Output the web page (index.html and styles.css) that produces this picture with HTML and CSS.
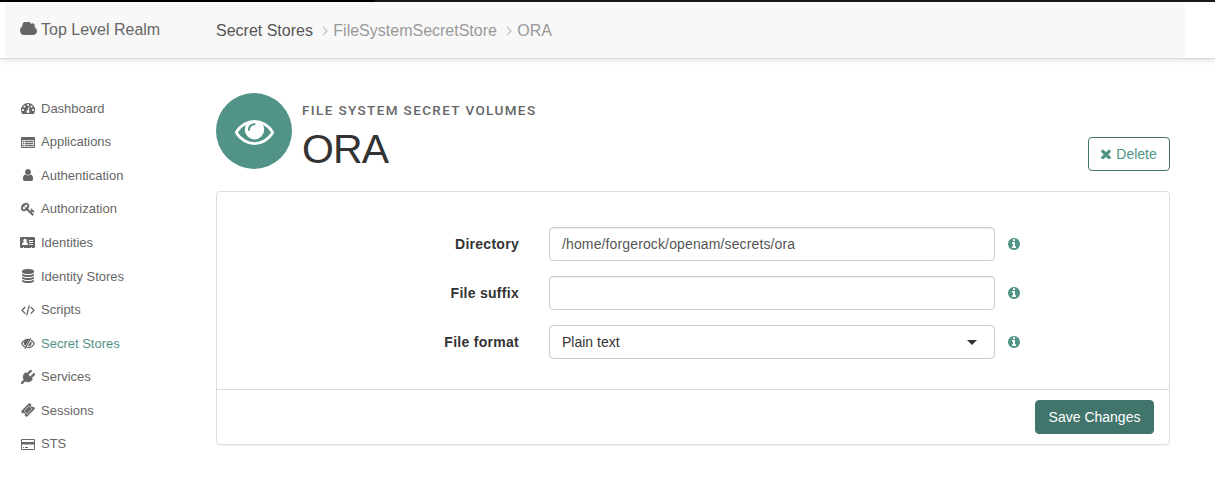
FILE: index.html
```html
<!DOCTYPE html>
<html lang="en">
<head>
<meta charset="utf-8">
<title>ORA - Secret Stores</title>
<link rel="stylesheet" href="styles.css">
</head>
<body>
<svg class="sprite" aria-hidden="true">
  <symbol id="info" viewBox="128 128 1536 1536"><path d="M1152 1376v-160q0-14-9-23t-23-9h-96v-512q0-14-9-23t-23-9h-320q-14 0-23 9t-9 23v160q0 14 9 23t23 9h96v320h-96q-14 0-23 9t-9 23v160q0 14 9 23t23 9h448q14 0 23-9t9-23zm-128-896v-160q0-14-9-23t-23-9h-192q-14 0-23 9t-9 23v160q0 14 9 23t23 9h192q14 0 23-9t9-23zm640 416q0 209-103 385.5t-279.5 279.5-385.5 103-385.5-103-279.5-279.5-103-385.5 103-385.5 279.5-279.5 385.5-103 385.5 103 279.5 279.5 103 385.5z"/></symbol>
</svg>
<div class="topline"></div>
<header class="header">
  <div class="header-inner">
    <a class="realm"><svg class="cloud" viewBox="64 256 1920 1280" preserveAspectRatio="none"><path d="M1984 1152q0 159-112.5 271.5t-271.5 112.5h-1088q-185 0-316.500-131.500t-131.500-316.500q0-132 71-241.500t187-163.500q-2-28-2-43 0-212 150-362t362-150q158 0 286.500 88t187.500 230q70-62 166-62 106 0 181 75t75 181q0 75-41 138 129 30 213 134.500t84 239.500z"/></svg><span>Top Level Realm</span></a>
    <nav class="crumbs">
      <a class="crumb-link">Secret Stores</a>
      <svg class="chev" viewBox="0 0 6 10"><path d="M1 1l4 4-4 4"/></svg>
      <span>FileSystemSecretStore</span>
      <svg class="chev" viewBox="0 0 6 10"><path d="M1 1l4 4-4 4"/></svg>
      <span>ORA</span>
    </nav>
  </div>
</header>
<div class="page">
  <nav class="sidebar">
    <a class="item"><svg class="ico" viewBox="0 0 1792 1792"><path d="M384 1152q0-53-37.5-90.5t-90.5-37.5-90.5 37.5-37.5 90.5 37.5 90.5 90.5 37.5 90.5-37.5 37.5-90.5zm192-448q0-53-37.5-90.5t-90.5-37.5-90.5 37.5-37.5 90.5 37.5 90.5 90.5 37.5 90.5-37.5 37.5-90.5zm428 481l101-382q6-26-7.5-48.5t-38.5-29.5-48 6.5-30 39.5l-101 382q-60 5-107 43.5t-63 98.5q-20 77 20 146t117 89 146-20 89-117q16-60-6-117t-72-91zm660-33q0-53-37.5-90.5t-90.5-37.5-90.5 37.5-37.5 90.5 37.5 90.5 90.5 37.5 90.5-37.5 37.5-90.5zm-640-640q0-53-37.5-90.5t-90.5-37.5-90.5 37.5-37.5 90.5 37.5 90.5 90.5 37.5 90.5-37.5 37.5-90.5zm448 192q0-53-37.5-90.5t-90.5-37.5-90.5 37.5-37.5 90.5 37.5 90.5 90.5 37.5 90.5-37.5 37.5-90.5zm320 448q0 261-141 483-19 29-54 29h-1402q-35 0-54-29-141-221-141-483 0-182 71-348t191-286 286-191 348-71 348 71 286 191 191 286 71 348z"/></svg>Dashboard</a>
    <a class="item"><svg class="ico" viewBox="0 0 14 14"><path class="tint" d="M1 3h12v9H1z"/><path fill-rule="evenodd" d="M1 2h12q1 0 1 1v9q0 1-1 1h-12q-1 0-1-1v-9q0-1 1-1zM1 5v7h12v-7zM2 6h1v1h-1zM4 6h8v1h-8zM2 8h1v1h-1zM4 8h8v1h-8zM2 10h1v1h-1zM4 10h8v1h-8z"/></svg>Applications</a>
    <a class="item"><svg class="ico" viewBox="0 0 1792 1792"><path d="M1536 1399q0 109-62.5 187t-150.5 78h-854q-88 0-150.5-78t-62.5-187q0-85 8.5-160.5t31.5-152 58.5-131 94-89 134.5-34.5q131 128 313 128t313-128q76 0 134.5 34.5t94 89 58.5 131 31.5 152 8.5 160.5zm-256-887q0 159-112.5 271.5t-271.5 112.5-271.5-112.5-112.5-271.5 112.5-271.5 271.5-112.5 271.5 112.5 112.5 271.5z"/></svg>Authentication</a>
    <a class="item"><svg class="ico" viewBox="0 0 1792 1792"><path class="bold" d="M832 512q0-80-56-136t-136-56-136 56-56 136q0 42 19 83-41-19-83-19-80 0-136 56t-56 136 56 136 136 56 136-56 56-136q0-42-19-83 41 19 83 19 80 0 136-56t56-136zm851 704q0 17-49 66t-66 49q-9 0-28.5-16t-36.5-33-38.5-40-24.5-26l-96 96 220 220q28 28 28 68 0 42-39 81t-81 39q-40 0-68-28l-671-671q-176 131-365 131-163 0-265.5-102.5t-102.5-265.5q0-160 95-313t248-248 313-95q163 0 265.5 102.5t102.5 265.5q0 189-131 365l355 355 96-96q-3-3-26-24.5t-40-38.5-33-36.5-16-28.5q0-17 49-66t66-49q13 0 23 10 6 6 46 44.5t82 79.5 86.5 86 73 78 28.5 41z"/></svg>Authorization</a>
    <a class="item"><svg class="ico wide" viewBox="0 0 15 14"><path fill-rule="evenodd" d="M1 2h13q1 0 1 1v9q0 1-1 1h-2v-.8h-1v.8h-7v-.8h-1v.8h-2q-1 0-1-1v-9q0-1 1-1zM5 3.800a1.800 1.800 0 0 0-1.200 3.100Q2 7.100 2 10h6Q8 7.100 6.200 6.900A1.800 1.800 0 0 0 5 3.800zM9 5v1h4v-1zM9 7v1h4v-1zM9 9v.8h4v-.8z"/></svg>Identities</a>
    <a class="item"><svg class="ico" viewBox="0 0 1792 1792"><path d="M896 768q237 0 443-43t325-127v170q0 69-103 128t-280 93.500-385 34.500-385-34.500-280-93.500-103-128v-170q119 84 325 127t443 43zm0 768q237 0 443-43t325-127v170q0 69-103 128t-280 93.500-385 34.500-385-34.500-280-93.500-103-128v-170q119 84 325 127t443 43zm0-384q237 0 443-43t325-127v170q0 69-103 128t-280 93.500-385 34.500-385-34.500-280-93.500-103-128v-170q119 84 325 127t443 43zm0-1152q208 0 385 34.500t280 93.500 103 128v128q0 69-103 128t-280 93.500-385 34.500-385-34.500-280-93.500-103-128v-128q0-69 103-128t280-93.500 385-34.500z"/></svg>Identity Stores</a>
    <a class="item"><svg class="ico line" viewBox="0 0 14 14"><path d="M4.300 4L1 7.300l3.300 3.300M9.700 4L13 7.300l-3.300 3.300M8.300 2.300L5.700 12.300"/></svg>Scripts</a>
    <a class="item active"><svg class="ico line" viewBox="0 0 14 14"><path d="M7 3.300Q3 3.300.7 7.500 3 11.700 7 11.700T13.300 7.500Q11 3.300 7 3.300z"/><path class="solid" d="M7 3.700A3.300 3.300 0 0 0 4.600 9.800L8 3.800zM9.900 4.900L6.800 10.300A3.300 3.300 0 0 0 9.900 4.900z"/><path class="slash" d="M10.500 2L4.900 13"/><path d="M9.700 2.200L4.100 12.800"/></svg>Secret Stores</a>
    <a class="item"><svg class="ico" viewBox="0 0 1792 1792"><path class="bold" d="M1755 453q37 38 37 90.500t-37 90.500l-401 400 150 150-160 160q-163 163-389.500 186.500t-411.500-100.500l-362 362h-181v-181l362-362q-124-185-100.500-411.500t186.500-389.500l160-160 150 150 400-401q38-37 91-37t90 37 37 90.500-37 90.500l-400 401 234 234 401-400q38-37 91-37t90 37z"/></svg>Services</a>
    <a class="item"><svg class="ico" viewBox="0 0 1792 1792"><path class="bold" d="M1024 452l316 316-572 572-316-316zm-211 979l618-618q19-19 19-45t-19-45l-362-362q-18-18-45-18t-45 18l-618 618q-19 19-19 45t19 45l362 362q18 18 45 18t45-18zm889-637l-907 908q-37 37-90.500 37t-90.500-37l-126-125q56-56 56-136t-56-136-136-56-136 56l-125-126q-37-37-37-90.500t37-90.500l907-906q37-37 90.500-37t90.500 37l125 125q-56 56-56 136t56 136 136 56 136-56l126 125q37 37 37 90.500t-37 90.500z"/></svg>Sessions</a>
    <a class="item"><svg class="ico" viewBox="0 0 14 14"><path fill-rule="evenodd" d="M1 2h12q1 0 1 1v9q0 1-1 1h-12q-1 0-1-1v-9q0-1 1-1zM1 3v2h12v-2zM1 7.500v4.500h12v-4.500zM2 10h1v1h-1zM4 10h3v1h-3z"/></svg>STS</a>
  </nav>
  <main class="main">
    <div class="title-row">
      <div class="badge"><svg class="eye" viewBox="0 384 1792 1152"><path d="M1664 960q-152-236-381-353 61 104 61 225 0 185-131.500 316.500t-316.500 131.500-316.500-131.500-131.500-316.500q0-121 61-225-229 117-381 353 133 205 333.500 326.500t434.500 121.500 434.500-121.500 333.500-326.500zm-720-384q0-20-14-34t-34-14q-125 0-214.500 89.500t-89.500 214.500q0 20 14 34t34 14 34-14 14-34q0-86 61-147t147-61q20 0 34-14t14-34zm848 384q0 34-20 69-140 230-376.500 368.500t-499.500 138.500-499.500-139-376.500-368q-20-35-20-69t20-69q140-229 376.500-368t499.500-139 499.500 139 376.500 368q20 35 20 69z"/></svg></div>
      <div class="titles">
        <h4 class="kicker">FILE SYSTEM SECRET VOLUMES</h4>
        <h1 class="title">ORA</h1>
      </div>
      <button class="btn delete"><svg class="times" viewBox="302 302 1188 1188"><path d="M1490 1322q0 40-28 68l-136 136q-28 28-68 28t-68-28l-294-294-294 294q-28 28-68 28t-68-28l-136-136q-28-28-28-68t28-68l294-294-294-294q-28-28-28-68t28-68l136-136q28-28 68-28t68 28l294 294 294-294q28-28 68-28t68 28l136 136q28 28 28 68t-28 68l-294 294 294 294q28 28 28 68z"/></svg>Delete</button>
    </div>
    <section class="panel">
      <div class="form">
        <div class="row"><label class="label">Directory</label><div class="field typed">/home/forgerock/openam/secrets/ora</div><svg class="info"><use href="#info"/></svg></div>
        <div class="row"><label class="label">File suffix</label><div class="field"></div><svg class="info"><use href="#info"/></svg></div>
        <div class="row"><label class="label">File format</label><div class="field select">Plain text<span class="caret"></span></div><svg class="info"><use href="#info"/></svg></div>
      </div>
      <div class="footer"><button class="btn save">Save Changes</button></div>
    </section>
  </main>
</div>
</body>
</html>
```
FILE: styles.css
```css
* { box-sizing: border-box; }
body { margin: 0; background: #fff; color: #333; font: 14px/20px "Liberation Sans", Arial, sans-serif; }
svg { display: block; flex: none; fill: currentColor; }
.sprite { display: none; }
.topline { height: 2px; background: linear-gradient(90deg, #000 375px, #161a18 375px); }
.header { height: 57px; padding: 0 30px 0 5px; border-bottom: 1px solid #dadada; box-shadow: 0 2px 5px rgba(0, 0, 0, .1); }
.header-inner { display: flex; height: 56px; padding-left: 15px; background: #f8f8f8; border-radius: 4px; font-size: 16px; }
.realm { display: flex; width: 196px; padding-top: 18px; color: #666; }
.cloud { width: 17px; height: 13px; margin: 2px 4px 0 0; }
.crumbs { display: flex; padding-top: 19px; color: #999; }
.crumb-link { color: #555; }
.chev { width: 6px; height: 10px; margin: 5px 5.4px 0 9px; fill: none; stroke: #ccc; stroke-width: 1.5; }
.page { display: flex; padding: 34px 45px 0 20px; }
.sidebar { width: 196px; margin-top: -1px; }
.item { display: flex; align-items: center; height: 33.55px; color: #666; font-size: 13px; }
.ico { width: 14px; height: 14px; margin: -1px 6px 0 1px; color: #666; }
.ico.wide { width: 15px; margin-left: 0; }
.line { fill: none; stroke: #666; stroke-width: 1.3; }
.solid { fill: #666; stroke: none; }
.slash { stroke: #fff; stroke-width: 1; }
.bold { stroke: currentColor; stroke-width: 60; }
.tint { fill: #d5d5d5; }
.active { color: #519387; }
.main { flex: 1; }
.title-row { display: flex; height: 76px; }
.badge { display: flex; align-items: center; justify-content: center; width: 76px; height: 76px; border-radius: 50%; background: #519387; color: #fff; }
.eye { width: 39px; height: 25px; margin-top: 3px; }
.titles { flex: 1; padding: 7px 0 0 10px; }
.kicker { margin: 0; color: #666; font: 500 13.5px/20px Roboto, "Liberation Sans", sans-serif; letter-spacing: 1.38px; }
.title { margin: 7px 0 0; font-size: 41px; line-height: 45px; font-weight: 400; letter-spacing: -.9px; }
.btn { display: flex; align-items: center; justify-content: center; height: 34px; border-radius: 4px; font: 14px/20px "Liberation Sans", Arial, sans-serif; padding: 0; }
.delete { width: 82px; margin-top: 44px; border: 1px solid #41756b; background: #fff; color: #519387; }
.times { width: 10px; height: 10px; margin-right: 5px; }
.panel { margin-top: 22px; border: 1px solid #ddd; border-radius: 4px; box-shadow: 0 1px 1px rgba(0, 0, 0, .05); }
.form { display: grid; gap: 15px; padding: 35px 0 30px; }
.row { display: flex; align-items: center; height: 34px; }
.label { width: 302px; margin-right: 30px; text-align: right; font-weight: 700; letter-spacing: .28px; }
.field { display: flex; align-items: center; justify-content: space-between; width: 446px; height: 34px; padding: 0 12px; border: 1px solid #ccc; border-radius: 4px; box-shadow: inset 0 1px 1px rgba(0, 0, 0, .075); }
.typed { color: #555; letter-spacing: .13px; }
.select { box-shadow: none; padding-right: 17px; }
.caret { border: 5px solid transparent; border-top-color: #333; border-bottom: 0; }
.info { width: 12px; height: 12px; margin-left: 13px; color: #519387; }
.footer { display: flex; justify-content: flex-end; padding: 10px 15px; border-top: 1px solid #ddd; }
.save { width: 119px; border: 1px solid #41756b; background: #41756b; color: #fff; }
```
